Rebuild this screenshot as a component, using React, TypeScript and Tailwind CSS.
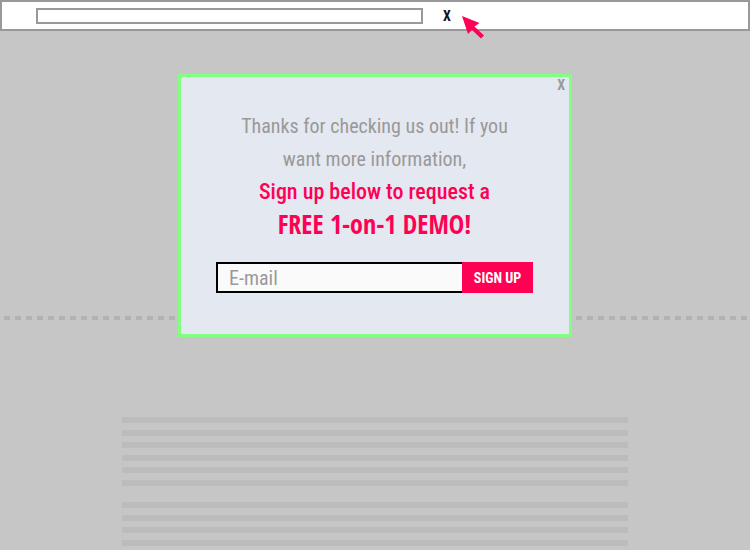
const paragraphs = [6, 6];

function Cursor() {
  return (
    <svg aria-hidden="true" viewBox="0 0 24 24" className="absolute left-[459px] top-[13px] size-6 fill-[#ff0055]">
      <path d="M1 1 L18.500 8 L13.500 11.500 L23 20.500 L20 23.500 L11 15 L7 19 Z" />
    </svg>
  );
}

export default function App() {
  return (
    <div className="relative h-screen overflow-hidden bg-[#c6c6c6] font-['Roboto_Condensed','Roboto',sans-serif]">
      <header className="relative flex h-[31px] items-center gap-5 border-2 border-[#999999] bg-white pl-[34px]">
        <input aria-label="Address" className="h-4 w-[387px] border-2 border-[#999999] bg-white px-1 text-xs outline-none" />
        <button aria-label="Close tab" className="text-sm leading-4 font-bold text-[#111122]">X</button>
        <Cursor />
      </header>

      <main>
        <div className="mt-[285px] h-1 bg-[repeating-linear-gradient(to_right,transparent_0_4px,#b2b2b2_4px_10px,transparent_10px_11px)]" />
        <div className="mx-auto mt-[97px] flex w-[506px] flex-col gap-4">
          {paragraphs.map((lines, p) => (
            <div key={p} className="flex h-[69px] flex-col justify-between">
              {Array.from({ length: lines }, (_, i) => (
                <div key={i} className="h-1.5 bg-[#bcbcbc]" />
              ))}
            </div>
          ))}
        </div>
      </main>

      <div className="absolute inset-x-0 top-[74px] flex justify-center">
        <section
          role="dialog"
          aria-label="Request a demo"
          className="relative w-[394px] border-[3px] border-[#80ff80] bg-[#e4e8f0] pt-[33px] pr-9 pb-[41px] pl-[35px] text-center"
        >
          <button aria-label="Close" className="absolute top-0 right-1 text-sm leading-4 font-bold text-[#999999]">X</button>
          <p className="text-xl leading-[33px] text-[#999999]">
            Thanks for checking us out! If you
            <br />
            want more information,
          </p>
          <p className="text-[22px] leading-8 font-medium text-[#ff0055]">Sign up below to request a</p>
          <p className="font-['Open_Sans_Condensed','Open_Sans',sans-serif] text-[26px] leading-8 font-bold text-[#ff0055]">FREE 1-on-1 DEMO!</p>
          <form className="mt-[22px] flex h-[31px]" onSubmit={(e) => e.preventDefault()}>
            <input
              type="email"
              aria-label="E-mail"
              placeholder="E-mail"
              className="min-w-0 flex-1 border-2 border-r-0 border-black bg-[#fafafa] pl-[11px] text-xl text-[#555555] outline-none placeholder:text-[#999999]"
            />
            <button type="submit" className="w-[71px] bg-[#ff0055] text-sm leading-4 font-bold text-white">
              SIGN UP
            </button>
          </form>
        </section>
      </div>
    </div>
  );
}
